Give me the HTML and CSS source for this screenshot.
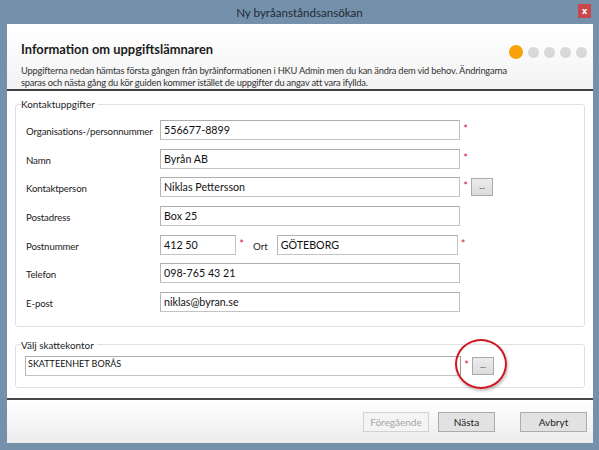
FILE: index.html
```html
<!DOCTYPE html>
<html>
<head>
<meta charset="utf-8">
<link rel="stylesheet" href="styles.css">
</head>
<body>
<div class="window">
  <div class="titlebar">
    <span></span>
    <span class="title">Ny byråanståndsansökan</span>
    <span class="close-wrap"><span class="close">x</span></span>
  </div>
  <div class="client">
    <div class="header">
      <div class="head-row">
        <h1>Information om uppgiftslämnaren</h1>
        <div class="dots">
          <span class="dot active"></span><span class="dot"></span><span class="dot"></span><span class="dot"></span><span class="dot"></span>
        </div>
      </div>
      <p class="desc">Uppgifterna nedan hämtas första gången från byråinformationen i HKU Admin men du kan ändra dem vid behov. Ändringarna sparas och nästa gång du kör guiden kommer istället de uppgifter du angav att vara ifyllda.</p>
    </div>
    <div class="content">
      <fieldset class="group contact">
        <legend>Kontaktuppgifter</legend>
        <div class="form">
          <label>Organisations-/personnummer</label>
          <div class="field"><span class="input">556677-8899</span><span class="req">*</span></div>

          <label>Namn</label>
          <div class="field"><span class="input">Byrån AB</span><span class="req">*</span></div>

          <label>Kontaktperson</label>
          <div class="field"><span class="input">Niklas Pettersson</span><span class="req">*</span><span class="btn dots-btn">...</span></div>

          <label>Postadress</label>
          <div class="field"><span class="input">Box 25</span></div>

          <label>Postnummer</label>
          <div class="field"><span class="input zip">412 50</span><span class="req">*</span><span class="ort">Ort</span><span class="input city">GÖTEBORG</span><span class="req">*</span></div>

          <label>Telefon</label>
          <div class="field"><span class="input">098-765 43 21</span></div>

          <label>E-post</label>
          <div class="field"><span class="input">niklas@byran.se</span></div>
        </div>
      </fieldset>
      <fieldset class="group office">
        <legend>Välj skattekontor</legend>
        <div class="field office-field">
          <span class="input wide">SKATTEENHET BORÅS</span><span class="req">*</span><span class="btn dots-btn">...</span>
          <span class="highlight"></span>
        </div>
      </fieldset>
    </div>
    <div class="footer">
      <span class="btn big prev disabled">Föregående</span>
      <span class="btn big next">Nästa</span>
      <span class="btn big cancel">Avbryt</span>
    </div>
  </div>
</div>
</body>
</html>
```

FILE: styles.css
```css
* { box-sizing: border-box; }
html, body {
  margin: 0;
  padding: 0;
}
body {
  width: 599px;
  height: 450px;
  background: #7590aa;
  font-family: Lato, "Noto Sans", sans-serif;
  color: #222;
  overflow: hidden;
}
.window {
  display: flex;
  flex-direction: column;
  height: 450px;
}
.titlebar {
  height: 24px;
  display: grid;
  grid-template-columns: 1fr auto 1fr;
  align-items: center;
}
.title {
  font-size: 11.6px;
  color: #1e2a36;
  padding-top: 1px;
}
.close-wrap {
  display: flex;
  justify-content: flex-end;
  padding-right: 8px;
}
.close {
  width: 13px;
  height: 14px;
  background: #c9474b;
  color: #fff;
  font-family: "Noto Sans", sans-serif;
  font-size: 9px;
  font-weight: bold;
  line-height: 13px;
  text-align: center;
  margin-top: -2px;
}
.client {
  margin: 0 6px 0 7px;
  height: 419px;
  background: #fff;
  display: flex;
  flex-direction: column;
}
.header {
  height: 67px;
  padding: 15px 6px 0 14px;
  background: linear-gradient(#ffffff, #f3f3f3);
  border-bottom: 2px solid #3f3f3f;
}
.head-row {
  display: flex;
  justify-content: space-between;
  align-items: center;
}
h1 {
  margin: 0;
  font-size: 12.9px;
  font-weight: bold;
  line-height: 17px;
  color: #1c1c1c;
}
.dots {
  display: flex;
  align-items: center;
  gap: 5px;
  margin-top: 6px;
}
.dot {
  width: 11px;
  height: 11px;
  border-radius: 50%;
  background: #d8d8d8;
}
.dot.active {
  width: 14px;
  height: 14px;
  background: #f8a108;
}
.desc {
  margin: 6px 0 0;
  width: 498px;
  font-size: 9.3px;
  letter-spacing: -0.2px;
  line-height: 11.5px;
  color: #333;
}
.content {
  flex: 1;
  padding: 7px 8px 0;
}
.group {
  margin: 0;
  border: 1px solid #e0e0e0;
  border-radius: 3px;
  padding: 0;
}
legend {
  font-size: 9.9px;
  color: #222;
  margin-left: 5px;
  padding: 0 3px 0 0;
}
.form {
  display: grid;
  grid-template-columns: 134px 1fr;
  row-gap: 8.67px;
  align-items: center;
  padding: 10px 10px 14px 10px;
}
label {
  font-size: 9.7px;
  letter-spacing: -0.15px;
  color: #222;
  padding-top: 2px;
}
.field {
  display: flex;
  align-items: center;
  height: 20px;
}
.input {
  display: block;
  width: 300px;
  height: 20px;
  border: 1px solid #c3c3c3;
  border-top-color: #adadad;
  border-left-color: #b5b5b5;
  background: #fff;
  font-size: 10.7px;
  line-height: 18px;
  padding-left: 3px;
  color: #111;
}
.input.zip { width: 76px; }
.input.city { width: 181px; }
.ort {
  font-size: 9.7px;
  margin: 3px 9px 0 6px;
}
.req {
  color: #d4213a;
  font-size: 11px;
  width: 11px;
  text-align: center;
  margin-top: -3px;
}
.btn {
  display: flex;
  align-items: center;
  justify-content: center;
  border: 1px solid #a9a9a9;
  background: linear-gradient(#ececec, #dcdcdc);
  color: #222;
}
.dots-btn {
  width: 22px;
  height: 18px;
  font-size: 8px;
  line-height: 1;
  padding-bottom: 2px;
}
.office {
  margin-top: 12px;
}
.office-field {
  position: relative;
  margin: 5px 10px 11px 9px;
}
.input.wide {
  width: 436px;
  font-size: 9px;
  line-height: 12px;
  padding: 1px 0 0 2px;
  border-right-color: #9a9a9a;
}
.highlight {
  position: absolute;
  left: 430px;
  top: -17px;
  width: 52px;
  height: 50px;
  border: 2px solid #d0161e;
  border-radius: 50%;
  box-shadow: 1px 2px 3px rgba(0,0,0,0.25);
}
.footer {
  height: 45px;
  border-top: 2px solid #474747;
  background: linear-gradient(#ffffff, #ececec);
  display: flex;
  justify-content: flex-end;
  align-items: flex-start;
  padding: 12px 6px 0 0;
}
.btn.big {
  height: 20px;
  font-size: 10px;
  background: #e2e2e2;
  border-color: #acacac;
}
.btn.big.prev { width: 66px; }
.btn.big.next { width: 57px; margin-left: 9px; }
.btn.big.cancel { width: 67px; margin-left: 25px; }
.btn.big.disabled {
  background: #f4f4f4;
  border-color: #d2d2d2;
  color: #a6a6a6;
}
```
